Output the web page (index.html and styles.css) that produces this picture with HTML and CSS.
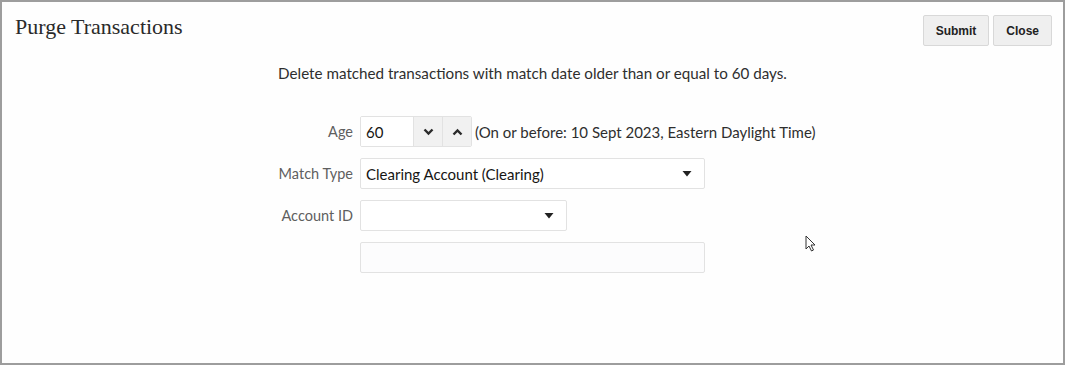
FILE: index.html
```html
<!DOCTYPE html>
<html lang="en">
<head>
<meta charset="UTF-8" />
<title>Purge Transactions</title>
<link rel="stylesheet" href="styles.css">
</head>
<body>
  <div class="dialog">
    <header class="dialog-header">
      <h1>Purge Transactions</h1>
      <div class="actions">
        <button class="btn">Submit</button>
        <button class="btn">Close</button>
      </div>
    </header>

    <p class="intro">Delete matched transactions with match date older than or equal to 60 days.</p>

    <form class="form">
      <label class="label">Age</label>
      <div class="field-row">
        <div class="spinner">
          <input class="spin-input" type="text" value="60" />
          <span class="spin-btn">
            <svg width="11" height="8" viewBox="0 0 11 8"><path d="M1.5 1.5 L5.5 5.5 L9.5 1.5" fill="none" stroke="#2b2b2b" stroke-width="2.4"/></svg>
          </span>
          <span class="spin-btn">
            <svg width="11" height="8" viewBox="0 0 11 8"><path d="M1.5 6.5 L5.5 2.5 L9.5 6.5" fill="none" stroke="#2b2b2b" stroke-width="2.4"/></svg>
          </span>
        </div>
        <span class="hint">(On or before: 10 Sept 2023, Eastern Daylight Time)</span>
      </div>

      <label class="label">Match Type</label>
      <div class="select wide">
        <span>Clearing Account (Clearing)</span>
        <svg class="caret" width="10" height="6" viewBox="0 0 10 6"><path d="M0.5 0 H9.5 L5 5.5 Z" fill="#222"/></svg>
      </div>

      <label class="label">Account ID</label>
      <div class="select narrow">
        <span></span>
        <svg class="caret" width="10" height="6" viewBox="0 0 10 6"><path d="M0.5 0 H9.5 L5 5.5 Z" fill="#222"/></svg>
      </div>

      <span></span>
      <div class="box wide"></div>
    </form>

    <svg class="cursor" width="12" height="18" viewBox="0 0 12 18">
      <path d="M1 1 V14 L4 11 L6.5 16 L8.5 15 L6 10 H10 Z" fill="#fff" stroke="#333" stroke-width="1"/>
    </svg>
  </div>
</body>
</html>
```

FILE: styles.css
```css
* {
  box-sizing: border-box;
}

html, body {
  margin: 0;
  height: 100%;
  background: #fff;
}

.dialog {
  position: relative;
  width: 1065px;
  height: 365px;
  border: 2px solid #9d9d9d;
  background: #fefefe;
  font-family: 'Lato', sans-serif;
  color: #161513;
}

.dialog-header {
  display: flex;
  justify-content: space-between;
  align-items: flex-start;
  padding: 13px 11px 0 13px;
}

.dialog-header h1 {
  margin: 0;
  font-family: 'Liberation Serif', serif;
  font-weight: normal;
  font-size: 22px;
  line-height: 24px;
  color: #2a2a2a;
}

.actions {
  display: flex;
  gap: 4px;
}

.btn {
  height: 31px;
  padding: 0 12px;
  background: #efefef;
  border: 1px solid #d8d8d8;
  border-radius: 2px;
  font-family: 'Liberation Sans', sans-serif;
  font-weight: bold;
  font-size: 12px;
  color: #222;
}

.intro {
  margin: 17px 0 0;
  text-align: center;
  font-size: 15.2px;
  line-height: 20px;
  color: #2e2e2e;
}

.form {
  display: grid;
  grid-template-columns: 351px 1fr;
  column-gap: 7px;
  row-gap: 11px;
  margin-top: 33px;
  align-items: center;
}

.label {
  text-align: right;
  font-size: 14.5px;
  color: #5f5f5f;
}

.field-row {
  display: flex;
  align-items: center;
  gap: 3px;
}

.spinner {
  display: flex;
  height: 31px;
  border: 1px solid #e2e2e2;
  border-radius: 2px;
  overflow: hidden;
}

.spin-input {
  width: 52px;
  border: none;
  padding: 0 5px;
  font-family: 'Lato', sans-serif;
  font-size: 15px;
  color: #161513;
  background: #fff;
}

.spin-btn {
  width: 29px;
  display: flex;
  align-items: center;
  justify-content: center;
  background: #f1f1f1;
  border-left: 1px solid #e2e2e2;
}

.hint {
  font-size: 15px;
  color: #2e2e2e;
}

.select, .box {
  height: 31px;
  border: 1px solid #e2e2e2;
  border-radius: 2px;
  background: #fff;
}

.select {
  display: flex;
  align-items: center;
  justify-content: space-between;
  padding: 0 12px 0 5px;
  font-size: 15px;
  color: #161513;
}

.box {
  background: #fcfcfd;
}

.wide {
  width: 345px;
}

.narrow {
  width: 207px;
}

.cursor {
  position: absolute;
  left: 803px;
  top: 233px;
}
```
